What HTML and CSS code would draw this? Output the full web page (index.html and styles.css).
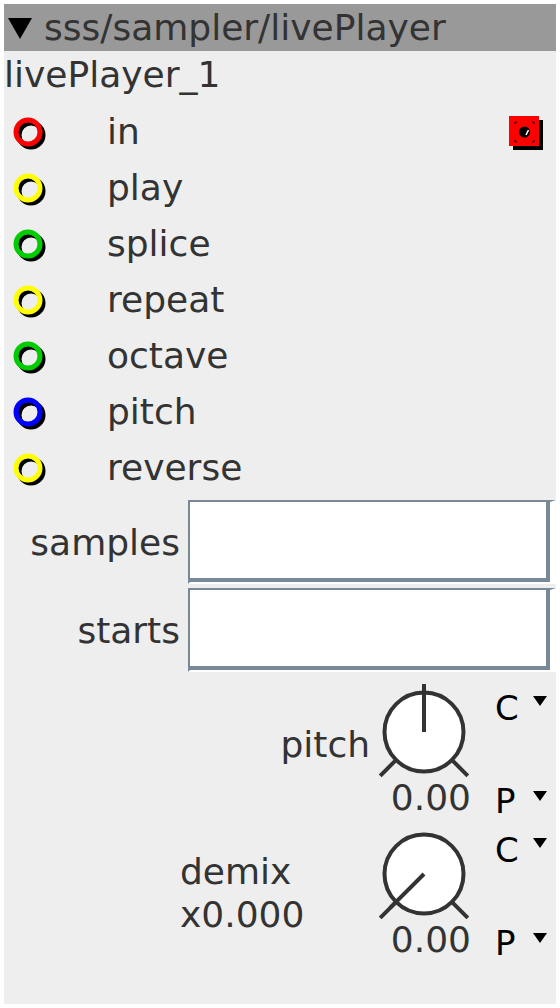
FILE: index.html
```html
<!DOCTYPE html>
<html>
<head>
<meta charset="utf-8">
<link rel="stylesheet" href="styles.css">
</head>
<body>
<div class="panel">
  <div class="header">
    <svg class="hdr-tri" viewBox="0 0 24 21" width="24" height="21"><polygon points="0,0 24,0 12,21" fill="#000"/></svg>
    <span class="hdr-text">sss/sampler/livePlayer</span>
  </div>
  <div class="title">livePlayer_1</div>
  <div class="ports">
    <div class="port">
      <svg class="jack" viewBox="0 0 40 40" width="40" height="40"><circle cx="23" cy="23" r="12" fill="none" stroke="#000" stroke-width="5"/><circle cx="20" cy="20" r="12" fill="none" stroke="#ff0000" stroke-width="5"/></svg>
      <span class="port-name">in</span>
      <svg class="in-btn" viewBox="0 0 40 40" width="40" height="40">
        <rect x="8" y="8" width="30" height="30" fill="#000"/>
        <rect x="4" y="4" width="30" height="30" fill="#ff0000"/>
        <circle cx="19.5" cy="20" r="5.5" fill="#000"/>
        <path d="M21 23 L23.5 18" stroke="#fff" stroke-width="1.6"/>
        <path d="M10 12 V10 H12 M27 10 H29 V12 M10 28 V30 H12 M27 30 H29 V28" stroke="#000" stroke-width="1" fill="none"/>
      </svg>
    </div>
    <div class="port">
      <svg class="jack" viewBox="0 0 40 40" width="40" height="40"><circle cx="23" cy="23" r="12" fill="none" stroke="#000" stroke-width="5"/><circle cx="20" cy="20" r="12" fill="none" stroke="#ffff00" stroke-width="5"/></svg>
      <span class="port-name">play</span>
    </div>
    <div class="port">
      <svg class="jack" viewBox="0 0 40 40" width="40" height="40"><circle cx="23" cy="23" r="12" fill="none" stroke="#000" stroke-width="5"/><circle cx="20" cy="20" r="12" fill="none" stroke="#00cc00" stroke-width="5"/></svg>
      <span class="port-name">splice</span>
    </div>
    <div class="port">
      <svg class="jack" viewBox="0 0 40 40" width="40" height="40"><circle cx="23" cy="23" r="12" fill="none" stroke="#000" stroke-width="5"/><circle cx="20" cy="20" r="12" fill="none" stroke="#ffff00" stroke-width="5"/></svg>
      <span class="port-name">repeat</span>
    </div>
    <div class="port">
      <svg class="jack" viewBox="0 0 40 40" width="40" height="40"><circle cx="23" cy="23" r="12" fill="none" stroke="#000" stroke-width="5"/><circle cx="20" cy="20" r="12" fill="none" stroke="#00cc00" stroke-width="5"/></svg>
      <span class="port-name">octave</span>
    </div>
    <div class="port">
      <svg class="jack" viewBox="0 0 40 40" width="40" height="40"><circle cx="23" cy="23" r="12" fill="none" stroke="#000" stroke-width="5"/><circle cx="20" cy="20" r="12" fill="none" stroke="#0000ff" stroke-width="5"/></svg>
      <span class="port-name">pitch</span>
    </div>
    <div class="port">
      <svg class="jack" viewBox="0 0 40 40" width="40" height="40"><circle cx="23" cy="23" r="12" fill="none" stroke="#000" stroke-width="5"/><circle cx="20" cy="20" r="12" fill="none" stroke="#ffff00" stroke-width="5"/></svg>
      <span class="port-name">reverse</span>
    </div>
  </div>
  <div class="fields">
    <div class="field">
      <span class="field-label">samples</span>
      <div class="box"><div class="box-inner"></div></div>
    </div>
    <div class="field">
      <span class="field-label">starts</span>
      <div class="box"><div class="box-inner"></div></div>
    </div>
  </div>
  <div class="knobs">
    <div class="knob-row">
      <div class="knob-label">pitch</div>
      <div class="knob-col">
        <svg class="knob" viewBox="0 0 100 100" width="100" height="100">
          <circle cx="50" cy="52" r="39.5" fill="#fff" stroke="#333" stroke-width="4"/>
          <line x1="21.7" y1="80.3" x2="6.2" y2="95.8" stroke="#333" stroke-width="4"/>
          <line x1="78.3" y1="80.3" x2="93.8" y2="95.8" stroke="#333" stroke-width="4"/>
          <line x1="50" y1="52" x2="50" y2="4" stroke="#333" stroke-width="4"/>
        </svg>
        <div class="knob-value">0.00</div>
      </div>
      <div class="cp">
        <div class="cp-item"><span class="cp-letter">C</span><svg class="cp-tri" viewBox="0 0 14 10" width="14" height="10"><polygon points="0,0 14,0 7,10" fill="#000"/></svg></div>
        <div class="cp-item cp-item-low"><span class="cp-letter">P</span><svg class="cp-tri" viewBox="0 0 14 10" width="14" height="10"><polygon points="0,0 14,0 7,10" fill="#000"/></svg></div>
      </div>
    </div>
    <div class="knob-row">
      <div class="knob-label knob-label-multi">demix<br>x0.000</div>
      <div class="knob-col">
        <svg class="knob" viewBox="0 0 100 100" width="100" height="100">
          <circle cx="50" cy="52" r="39.5" fill="#fff" stroke="#333" stroke-width="4"/>
          <line x1="21.7" y1="80.3" x2="6.2" y2="95.8" stroke="#333" stroke-width="4"/>
          <line x1="78.3" y1="80.3" x2="93.8" y2="95.8" stroke="#333" stroke-width="4"/>
          <line x1="50" y1="52" x2="16.1" y2="85.9" stroke="#333" stroke-width="4"/>
        </svg>
        <div class="knob-value">0.00</div>
      </div>
      <div class="cp">
        <div class="cp-item"><span class="cp-letter">C</span><svg class="cp-tri" viewBox="0 0 14 10" width="14" height="10"><polygon points="0,0 14,0 7,10" fill="#000"/></svg></div>
        <div class="cp-item cp-item-low"><span class="cp-letter">P</span><svg class="cp-tri" viewBox="0 0 14 10" width="14" height="10"><polygon points="0,0 14,0 7,10" fill="#000"/></svg></div>
      </div>
    </div>
  </div>
</div>
</body>
</html>
```

FILE: styles.css
```css
html, body {
  margin: 0;
  padding: 0;
  background: #fff;
}
body {
  font-family: "DejaVu Sans", "Liberation Sans", sans-serif;
  color: #333;
}
.panel {
  margin: 4px;
  width: 552px;
  height: 1000px;
  background: #eeeeee;
  overflow: hidden;
}
.header {
  height: 47px;
  background: #999999;
  display: flex;
  align-items: center;
  padding-left: 4px;
  font-size: 36px;
  line-height: 47px;
}
.hdr-tri {
  display: block;
  margin-right: 12px;
  margin-top: 2px;
}
.title {
  font-size: 36px;
  line-height: 47px;
  margin-bottom: 6px;
}
.port {
  display: grid;
  grid-template-columns: 103px 1fr auto;
  align-items: center;
  height: 56px;
  font-size: 36px;
  line-height: 56px;
}
.jack {
  display: block;
  margin-left: 4px;
}
.in-btn {
  display: block;
  margin-right: 11px;
}
.field {
  display: grid;
  grid-template-columns: 176px 1fr;
  column-gap: 8px;
  align-items: center;
  padding-top: 4px;
}
.field-label {
  text-align: right;
  font-size: 36px;
  line-height: 43px;
}
.box {
  height: 84px;
  box-sizing: border-box;
  border-style: solid;
  border-width: 2px 6px 2px 2px;
  border-color: #778899 #ffffff #ffffff #778899;
}
.box-inner {
  height: 100%;
  box-sizing: border-box;
  background: #fff;
  border-right: 4px solid #778899;
  border-bottom: 4px solid #778899;
}
.knobs {
  padding-top: 6px;
}
.knob-row {
  display: grid;
  grid-template-columns: 1fr 100px 82px;
  height: 142px;
}
.knob-label {
  font-size: 36px;
  line-height: 43px;
  text-align: right;
  padding-right: 4px;
  padding-top: 45px;
}
.knob-label-multi {
  text-align: left;
  padding-left: 176px;
  padding-top: 30px;
}
.knob-col {
  display: flex;
  flex-direction: column;
}
.knob {
  display: block;
  margin-top: 2px;
}
.knob-value {
  font-size: 36px;
  line-height: 36px;
  text-align: right;
  padding-right: 3px;
}
.cp {
  display: flex;
  flex-direction: column;
  justify-content: space-between;
  padding: 13px 0 2px 21px;
  color: #000;
  font-size: 34px;
  line-height: 34px;
}
.cp-item {
  display: flex;
  align-items: flex-start;
}
.cp-letter {
  display: inline-block;
  width: 38px;
}
.cp-tri {
  display: block;
  margin-top: 5px;
}
.cp-item-low .cp-tri {
  margin-top: 7px;
}
```
